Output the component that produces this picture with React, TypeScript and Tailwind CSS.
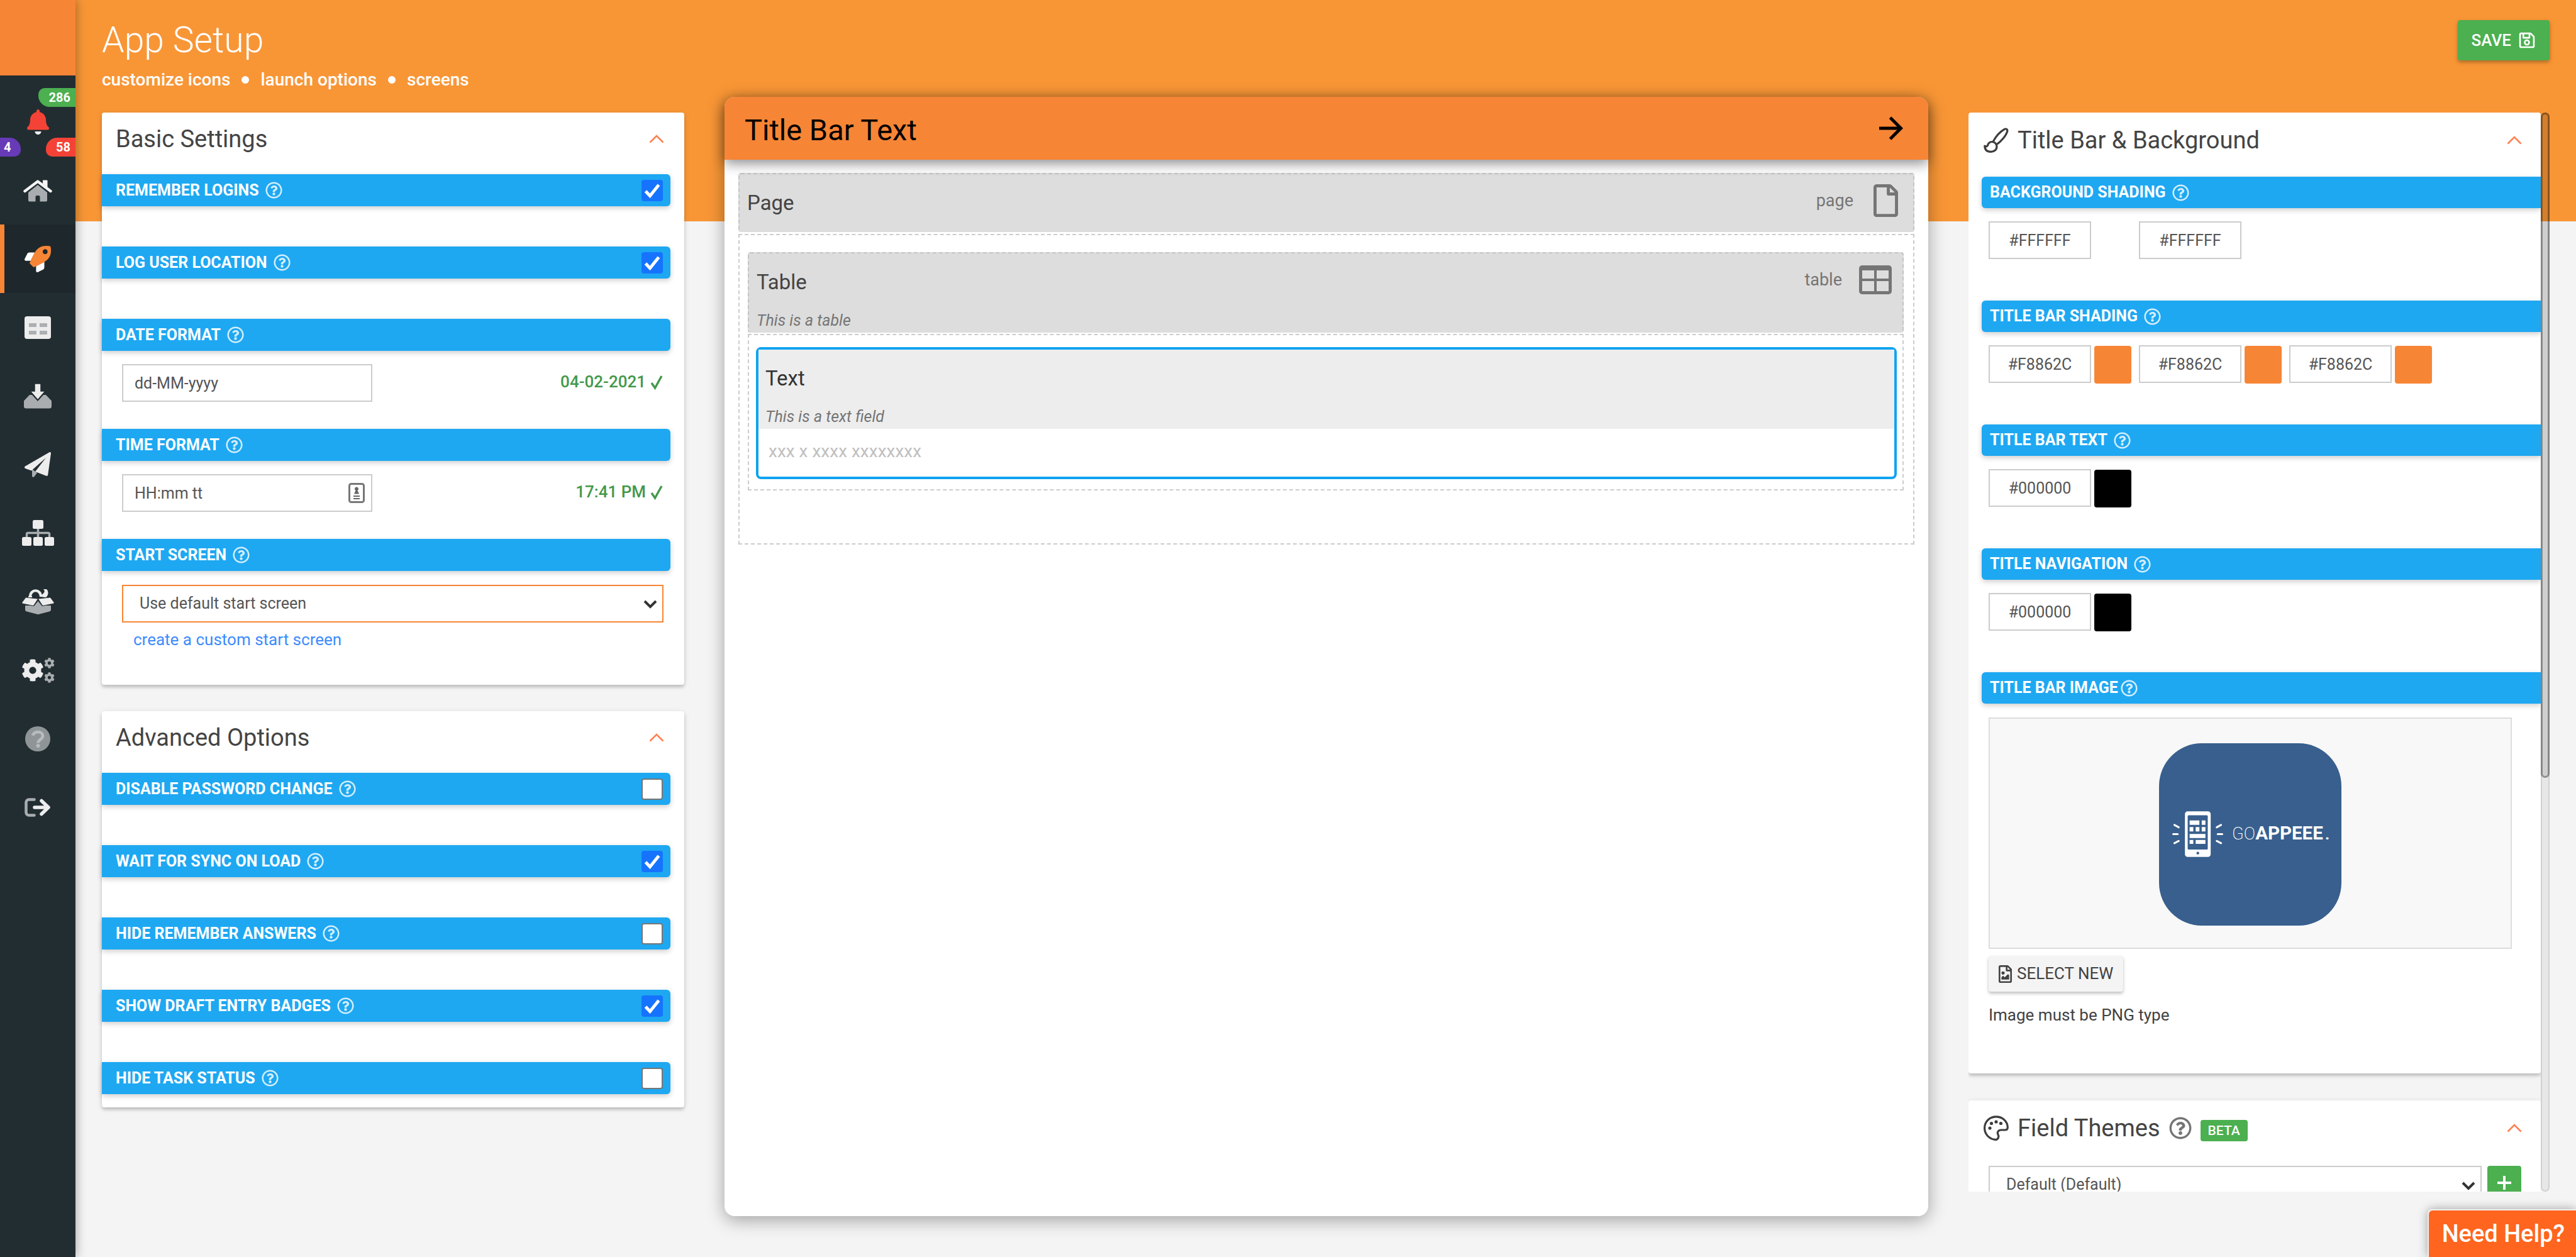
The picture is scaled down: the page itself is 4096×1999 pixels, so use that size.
import type { ReactNode } from 'react';
import { FaRegQuestionCircle, FaRegFileImage, FaRegSave, FaRegFile, FaCog } from 'react-icons/fa';

const CARD_SHADOW = 'shadow-[0_4px_4px_rgba(0,0,0,0.14),0_2px_10px_rgba(0,0,0,0.12)]';

function BellIcon() {
  return (
    <svg viewBox="0 0 448 512" className="h-[40px] w-[35px]" aria-hidden="true">
      <path fill="#f44336" d="M439.39 362.29c-19.32-20.76-55.47-51.99-55.47-154.29 0-77.7-54.48-139.9-127.94-155.16V32c0-17.67-14.32-32-31.98-32s-31.98 14.33-31.98 32v20.84C118.56 68.1 64.08 130.3 64.08 208c0 102.3-36.15 133.53-55.47 154.29-6 6.45-8.66 14.16-8.61 21.71.11 16.4 12.98 32 32.1 32h383.8c19.12 0 32-15.6 32.1-32 .05-7.55-2.61-15.27-8.61-21.71z" />
      <path fill="#eceff1" d="M224 512c35.32 0 63.97-28.65 63.97-64H160.03c0 35.35 28.65 64 63.97 64z" />
    </svg>
  );
}

function HomeIcon() {
  return (
    <svg viewBox="0 0 46 36" className="h-[36px] w-[46px]" aria-hidden="true">
      <path fill="#a9adaf" d="M23 9 38 21v12.500a2 2 0 0 1-2 2H26.500v-7.500a2 2 0 0 0-2-2h-3a2 2 0 0 0-2 2v7.500H10a2 2 0 0 1-2-2V21z" />
      <path fill="#f5f5f5" d="M31 1.500h6.500a1 1 0 0 1 1 1V13L31 7z" />
      <path fill="none" stroke="#f5f5f5" strokeWidth="4.400" strokeLinecap="round" strokeLinejoin="round" d="M2.500 19 23 3.500 43.500 19" />
    </svg>
  );
}

function RocketIcon() {
  return (
    <svg viewBox="0 0 512 512" className="h-[42px] w-[42px]" aria-hidden="true">
      <path fill="#ffffff" d="M199.100 128H94.900c-18.200 0-34.800 10.300-42.900 26.500L2.600 253.300c-8 16 3.600 34.700 21.500 34.700h95.100zM224 392v96c0 17.800 18.800 29.400 34.700 21.500l98.700-49.400c16.300-8.100 26.500-24.800 26.500-42.900V312z" />
      <path fill="#f78536" fillRule="evenodd" d="M505.100 19.100C503.800 13 499 8.200 492.900 6.900 460.700 0 435.500 0 410.400 0 307.200 0 245.300 55.200 199.100 128 165 190 135 255 101.200 325.700c-3.100 6.200-1.900 13.600 3 18.500l63.600 63.600c4.900 4.900 12.300 6.100 18.500 3C250 380 330 345 384 312.800c72.600-46.300 128-108.400 128-211.100.1-25.200.1-50.400-6.900-82.600zM400 160c-26.500 0-48-21.500-48-48s21.500-48 48-48 48 21.500 48 48-21.500 48-48 48z" />
    </svg>
  );
}

function GridIcon() {
  return (
    <svg viewBox="0 0 42 36" className="h-[36px] w-[42px]" aria-hidden="true">
      <rect width="42" height="36" rx="4" fill="#ededed" />
      <path fill="#adb0b2" d="M7 11h12v6H7zM24 11h12v6H24zM7 23h12v6H7zM24 23h12v6H24z" />
    </svg>
  );
}

function InboxIcon() {
  return (
    <svg viewBox="0 0 46 40" className="h-[40px] w-[46px]" aria-hidden="true">
      <path fill="#a9adaf" d="M10 18h4l9 10 9-10h4l9 9.500V36a3.500 3.500 0 0 1-3.500 3.500h-37A3.500 3.500 0 0 1 1 36v-8.500z" />
      <path fill="#ededed" stroke="#222d32" strokeWidth="1.500" d="M18 0h10v12h7L23 26 11 12h7z" />
    </svg>
  );
}

function PlaneIcon() {
  return (
    <svg viewBox="0 0 42 40" className="h-[40px] w-[42px]" aria-hidden="true">
      <path fill="#a9adaf" d="M12 27v11c0 1.800 2 2.500 3.200 1.200L20 33z" />
      <path fill="#ededed" d="M39.500.2 1 22.500c-1.500.9-1.300 2.800.2 3.400L11 29.500 34 9 17 31l17.500 6.800c1.200.5 2.500-.2 2.700-1.500L42 2C42.200.4 40.800-.5 39.500.2z" />
    </svg>
  );
}

function SitemapIcon() {
  return (
    <svg viewBox="0 0 51 41" className="h-[41px] w-[51px]" aria-hidden="true">
      <path fill="none" stroke="#a9adaf" strokeWidth="3.500" d="M25.500 12v17M7.500 29v-6.500a2 2 0 0 1 2-2h32a2 2 0 0 1 2 2V29" />
      <g fill="#ededed">
        <rect x="17" y="0" width="17" height="14" rx="2.500" />
        <rect x="0" y="27" width="15" height="14" rx="2.500" />
        <rect x="18" y="27" width="15" height="14" rx="2.500" />
        <rect x="36" y="27" width="15" height="14" rx="2.500" />
      </g>
    </svg>
  );
}

function BoxIcon() {
  return (
    <svg viewBox="0 0 51 40" className="h-[40px] w-[51px]" aria-hidden="true">
      <path fill="#a9adaf" d="M5 26h9l5 1 6.500-8L32 27l5-1h9v6.500c0 1.500-1 2.500-2.500 3L27 39.700a6 6 0 0 1-3 0L7.500 35.500C6 35 5 34 5 32.500z" />
      <path fill="none" stroke="#ededed" strokeWidth="4.200" d="M13 12c0-13 17-13 17 0" />
      <path fill="#ededed" d="M10 11h6v2h-6zM34 0c2 2 2.500 4 .5 6L29 12l9 1c4-3 5-9 1-13z" />
      <path fill="#ededed" stroke="#222d32" strokeWidth=".8" d="M6 13l19.500 2.200-6.500 10c-.6.900-1.500 1.200-2.500.9L1.200 23c-1-.3-1.500-1.300-1-2.200zM45 13l-19.500 2.200 6.500 10c.6.900 1.500 1.200 2.500.9L49.800 23c1-.3 1.500-1.300 1-2.200z" />
    </svg>
  );
}

function CogsIcon() {
  return (
    <span className="flex items-center" aria-hidden="true">
      <FaCog className="size-[36px] text-[#ededed]" />
      <span className="flex flex-col gap-[6px]">
        <FaCog className="size-[17px] text-[#a9adaf]" />
        <FaCog className="size-[17px] text-[#a9adaf]" />
      </span>
    </span>
  );
}

function QuestionIcon() {
  return (
    <svg viewBox="0 0 40 40" className="h-[40px] w-[40px]" aria-hidden="true">
      <circle cx="20" cy="20" r="20" fill="#8f9597" />
      <path fill="none" stroke="#b8bcbd" strokeWidth="4.600" d="M12 14.500C14 10 17 9 20 9c4.500 0 8 2.500 8 6.500 0 5.500-7.500 5.500-7.500 11" />
      <circle cx="20.500" cy="31" r="3" fill="#b8bcbd" />
    </svg>
  );
}

function SignOutIcon() {
  return (
    <svg viewBox="0 0 42 30" className="h-[30px] w-[42px]" aria-hidden="true">
      <path fill="none" stroke="#a9adaf" strokeWidth="4.500" strokeLinecap="round" d="M15.500 2.500H7A4.500 4.500 0 0 0 2.500 7v16A4.500 4.500 0 0 0 7 27.500h8.500" />
      <path fill="none" stroke="#ededed" strokeWidth="5.500" strokeLinecap="round" strokeLinejoin="round" d="M16 15h20M27 4.500 38 15 27 25.500" />
    </svg>
  );
}

function BrushIcon() {
  return (
    <svg viewBox="0 0 40 40" className="h-[40px] w-[40px]" fill="none" stroke="#3d3d3d" strokeWidth="3.200" strokeLinejoin="round" aria-hidden="true">
      <path d="M15 22.500C20 13 27 6 33 2.600c3-1.600 5.600.4 4.600 3.600C35.500 13 28 22 20.500 27" />
      <path d="M13.500 22.500c4 0 7.500 3 7.500 7.500 0 5-4 8.400-9.500 8.400-6 0-9.500-3.400-9.700-9.400 2 1.300 4 1.200 4.700-.8 1-3.500 3.500-5.700 7-5.700z" />
    </svg>
  );
}

function PaletteIcon() {
  return (
    <svg viewBox="0 0 40 40" className="h-[40px] w-[40px]" aria-hidden="true">
      <path fill="none" stroke="#3d3d3d" strokeWidth="3.200" d="M20 1.800C9.500 1.800 1.600 10 1.600 20c0 9.500 7 17 16.500 18.300 4.500.6 7-4 5-7.800-2.200-4.200.8-7.500 4.700-7.500h6.200c2.600 0 4.300-1.600 4.300-4C38.300 9.500 30 1.800 20 1.800z" />
      <g fill="#3d3d3d">
        <circle cx="10" cy="20" r="2.600" />
        <circle cx="12.500" cy="12.500" r="2.600" />
        <circle cx="20" cy="10" r="2.600" />
        <circle cx="27.500" cy="12.500" r="2.600" />
      </g>
    </svg>
  );
}

function TableIcon() {
  return (
    <svg viewBox="0 0 52 46" className="h-[46px] w-[52px]" aria-hidden="true">
      <path fill="#757575" fillRule="evenodd" d="M5 0h42a5 5 0 0 1 5 5v36a5 5 0 0 1-5 5H5a5 5 0 0 1-5-5V5a5 5 0 0 1 5-5zm0 8v13h19V8zm23 0v13h19V8zM5 25v16h19V25zm23 0v16h19V25z" />
    </svg>
  );
}

function LogoTile() {
  return (
    <svg viewBox="0 0 290 290" className="size-[290px]" role="img" aria-label="GoAppeee logo">
      <rect width="290" height="290" rx="68" fill="#385f8d" />
      <g transform="translate(11.400 92.400) scale(.3103)" fill="#fff">
        <path fillRule="evenodd" d="M110 51h104a14 14 0 0 1 14 14v206a14 14 0 0 1-14 14H110a14 14 0 0 1-14-14V65a14 14 0 0 1 14-14zm5 20a5 5 0 0 0-5 5v166a5 5 0 0 0 5 5h93a5 5 0 0 0 5-5V76a5 5 0 0 0-5-5zm47 187a7 7 0 1 0 0 14 7 7 0 0 0 0-14z" />
        <path d="M120 98h50v22h-50zM182 98h19v22h-19zM120 132h19v22h-19zM151 132h19v22h-19zM182 132h19v22h-19zM120 167h81v21h-81zM120 198h19v20h-19zM151 198h50v20h-50z" />
        <path fill="none" stroke="#fff" strokeWidth="10" strokeLinecap="round" d="m42 121 22 12M36 168h23M42 214l22-11M281 121l-22 12M287 168h-23M281 214l-22-11" />
        <text x="337" y="196" fontFamily="Roboto, sans-serif" fontSize="88" fontWeight="200">GO</text>
        <text x="457" y="196" fontFamily="Roboto, sans-serif" fontSize="95" fontWeight="700">APPEEE</text>
        <text x="814" y="196" fontFamily="Roboto, sans-serif" fontSize="80" fontWeight="700">.</text>
      </g>
    </svg>
  );
}

function CollapseButton({ label }: { label: string }) {
  return (
    <button type="button" aria-label={`Collapse ${label}`} className="ml-auto">
      <svg viewBox="0 0 24 14" className="h-[14px] w-[24px]" fill="none" stroke="#ff7f50" strokeWidth="2.600" aria-hidden="true">
        <path d="M1.500 12.500 12 2l10.500 10.500" />
      </svg>
    </button>
  );
}

function DropArrow({ className }: { className: string }) {
  return (
    <svg viewBox="0 0 22 14" className={`pointer-events-none absolute h-[14px] w-[22px] ${className}`} fill="none" stroke="#333" strokeWidth="4" aria-hidden="true">
      <path d="m2 2 9 9 9-9" />
    </svg>
  );
}

function HelpButton() {
  return (
    <button type="button" aria-label="Help" className="text-white/80">
      <FaRegQuestionCircle className="size-[27px]" />
    </button>
  );
}

function CheckBox({ id, checked }: { id: string; checked: boolean }) {
  return (
    <span className="relative mr-[12px] ml-auto flex">
      <input id={id} type="checkbox" defaultChecked={checked} className="peer size-[34px] appearance-none rounded-[4px] border-2 border-[#767676] bg-white checked:border-[#1673ff] checked:bg-[#1673ff]" />
      <svg viewBox="0 0 34 34" className="pointer-events-none absolute inset-0 hidden peer-checked:block" fill="none" stroke="#fff" strokeWidth="5" aria-hidden="true">
        <path d="m6.500 18 7 7.500L27.500 8" />
      </svg>
    </span>
  );
}

function SettingBar({ id, label, checked }: { id: string; label: string; checked?: boolean }) {
  return (
    <div className="mr-[22px] flex h-[51px] items-center gap-[10px] rounded-r-[6px] bg-[#1ea8f2] pl-[22px] text-[25px] font-bold text-white shadow-[0_3px_8px_rgba(0,0,0,0.2)]">
      <label htmlFor={id}>{label}</label>
      <HelpButton />
      {checked !== undefined && <CheckBox id={id} checked={checked} />}
    </div>
  );
}

function FormatField({ id, value, preview, children }: { id: string; value: string; preview: string; children?: ReactNode }) {
  return (
    <div className="flex h-[124px] items-start justify-between pt-[21px] pr-[34px] pl-[32px]">
      <div className="relative">
        <input id={id} type="text" defaultValue={value} className="h-[60px] w-[398px] border-2 border-[#cccccc] bg-white px-[18px] text-[25px] text-[#555]" />
        {children}
      </div>
      <span className="flex items-center gap-[7px] pt-[9px] text-[26px] font-medium text-[#43984a]">
        {preview}
        <svg viewBox="0 0 20 24" className="h-[24px] w-[20px]" fill="none" stroke="currentColor" strokeWidth="3.400" role="img" aria-label="valid">
          <path d="m2 13 5.500 8L18 2" />
        </svg>
      </span>
    </div>
  );
}

function Card({ title, children }: { title: string; children: ReactNode }) {
  return (
    <section className={`rounded-[4px] bg-white ${CARD_SHADOW}`}>
      <div className="mb-[14px] flex h-[84px] items-center pr-[32px] pl-[22px]">
        <h2 className="text-[38px] text-[#444]">{title}</h2>
        <CollapseButton label={title} />
      </div>
      {children}
    </section>
  );
}

function ThemeBar({ label, htmlFor, gap = 'gap-[10px]' }: { label: string; htmlFor: string; gap?: string }) {
  return (
    <div className={`ml-[21px] flex h-[50px] items-center rounded-l-[6px] bg-[#1ea8f2] pl-[13px] text-[25px] font-bold text-white shadow-[0_3px_8px_rgba(0,0,0,0.2)] ${gap}`}>
      <label htmlFor={htmlFor}>{label}</label>
      <HelpButton />
    </div>
  );
}

function ColorSetting({ id, label, colors }: { id: string; label: string; colors: { hex: string; swatch: string }[] }) {
  return (
    <div className="h-[197px]">
      <ThemeBar label={label} htmlFor={`${id}-0`} />
      <div className="flex gap-[12px] pt-[21px] pl-[32px]">
        {colors.map((c, i) => (
          <div key={i} className="flex gap-[5px]">
            <input id={`${id}-${i}`} aria-label={`${label} ${i + 1}`} type="text" defaultValue={c.hex} className="h-[60px] w-[163px] border-2 border-[#cccccc] bg-white text-center text-[25px] text-[#555]" />
            <button type="button" aria-label={`Pick ${c.hex}`} className={`mt-[1px] h-[60px] w-[59px] rounded-[4px] ${c.swatch}`} />
          </div>
        ))}
      </div>
    </div>
  );
}

const WHITE = { hex: '#FFFFFF', swatch: 'bg-white' };
const ORANGE = { hex: '#F8862C', swatch: 'bg-[#f78536]' };
const BLACK = { hex: '#000000', swatch: 'bg-black' };

const NAV: { label: string; icon: ReactNode; active?: boolean }[] = [
  { label: 'Home', icon: <HomeIcon /> },
  { label: 'Launch', icon: <RocketIcon />, active: true },
  { label: 'Screens', icon: <GridIcon /> },
  { label: 'Downloads', icon: <InboxIcon /> },
  { label: 'Send', icon: <PlaneIcon /> },
  { label: 'Structure', icon: <SitemapIcon /> },
  { label: 'Resources', icon: <BoxIcon /> },
  { label: 'Settings', icon: <CogsIcon /> },
  { label: 'Help', icon: <QuestionIcon /> },
  { label: 'Sign out', icon: <SignOutIcon /> },
];

function Sidebar() {
  return (
    <aside className="z-10 flex w-[120px] shrink-0 flex-col bg-[#222d32] shadow-[2px_0_14px_rgba(0,0,0,0.3)]">
      <div className="h-[120px] bg-[#f78536]" />
      <a href="#alerts" aria-label="Alerts" className="relative flex h-[128px] justify-center pt-[54px] text-[20px] leading-[30px] font-bold text-white">
        <BellIcon />
        <span className="absolute top-[20px] right-0 h-[30px] rounded-tl-[10px] rounded-bl-[18px] bg-[#4caf50] pr-[8px] pl-[17px]">286</span>
        <span className="absolute top-[99px] left-0 h-[30px] rounded-tr-[18px] rounded-br-[10px] bg-[#673ab7] pr-[16px] pl-[6px]">4</span>
        <span className="absolute top-[99px] right-0 h-[30px] rounded-tl-[18px] rounded-bl-[10px] bg-[#f44336] pr-[8px] pl-[16px]">58</span>
      </a>
      <nav className="flex flex-col">
        {NAV.map((item) => (
          <a
            key={item.label}
            href={`#${item.label}`}
            aria-label={item.label}
            className={item.active ? 'flex h-[109px] items-center justify-center border-l-[7px] border-[#f78536] bg-[#1e282c] pr-[7px]' : 'flex h-[109px] items-center justify-center'}
          >
            {item.icon}
          </a>
        ))}
      </nav>
    </aside>
  );
}

function Header() {
  return (
    <header className="flex h-[179px] shrink-0 items-start justify-between pt-[32px] pr-[42px] pl-[42px] text-white">
      <div>
        <h1 className="text-[57px] leading-[64px] font-light">App Setup</h1>
        <ul className="flex items-center gap-[18px] pt-[15px] text-[28px] leading-[32px] font-medium">
          <li>customize icons</li>
          <li className="size-[12px] rounded-full bg-white" aria-hidden="true" />
          <li>launch options</li>
          <li className="size-[12px] rounded-full bg-white" aria-hidden="true" />
          <li>screens</li>
        </ul>
      </div>
      <button type="button" className="flex h-[64px] items-center gap-[11px] rounded-[4px] bg-[#4caf50] px-[22px] text-[26px] font-medium shadow-[0_3px_6px_rgba(0,0,0,0.3)]">
        SAVE
        <FaRegSave className="size-[28px]" />
      </button>
    </header>
  );
}

function LeftColumn() {
  return (
    <div className="flex flex-col gap-[42px]">
      <Card title="Basic Settings">
        <div className="flex flex-col gap-[64px]">
          <SettingBar id="remember" label="REMEMBER LOGINS" checked />
          <SettingBar id="location" label="LOG USER LOCATION" checked />
          <SettingBar id="date" label="DATE FORMAT" />
        </div>
        <FormatField id="date" value="dd-MM-yyyy" preview="04-02-2021" />
        <SettingBar id="time" label="TIME FORMAT" />
        <FormatField id="time" value="HH:mm tt" preview="17:41 PM">
          <svg viewBox="0 0 26 32" className="absolute top-[14px] right-[12px] h-[32px] w-[26px]" aria-hidden="true">
            <rect x="1.500" y="1.500" width="23" height="29" rx="3" fill="#fff" stroke="#777" strokeWidth="3" />
            <path fill="#666" d="M13 6.500a3 3 0 0 1 1.500 5.600l2.500 5.400H9l2.500-5.400A3 3 0 0 1 13 6.500zM8 20h10v2H8zM8 24h10v2H8z" />
          </svg>
        </FormatField>
        <SettingBar id="start" label="START SCREEN" />
        <div className="h-[181px] pt-[22px] pr-[33px] pl-[32px]">
          <div className="relative">
            <select id="start" className="h-[60px] w-full appearance-none border-2 border-[#f78536] bg-white px-[26px] text-[25px] text-[#555]">
              <option>Use default start screen</option>
            </select>
            <DropArrow className="top-[24px] right-[10px]" />
          </div>
          <a href="#custom" className="mt-[11px] ml-[18px] inline-block text-[26px] leading-[32px] text-[#3d8bfd]">create a custom start screen</a>
        </div>
      </Card>
      <Card title="Advanced Options">
        <div className="flex flex-col gap-[64px] pb-[21px]">
          <SettingBar id="password" label="DISABLE PASSWORD CHANGE" checked={false} />
          <SettingBar id="sync" label="WAIT FOR SYNC ON LOAD" checked />
          <SettingBar id="answers" label="HIDE REMEMBER ANSWERS" checked={false} />
          <SettingBar id="badges" label="SHOW DRAFT ENTRY BADGES" checked />
          <SettingBar id="tasks" label="HIDE TASK STATUS" checked={false} />
        </div>
      </Card>
    </div>
  );
}

function Preview() {
  return (
    <section className="mt-[-25px] mb-[65px] rounded-[16px] bg-white shadow-[0_6px_28px_rgba(0,0,0,0.35)]">
      <div className="relative flex h-[100px] items-center justify-between rounded-t-[16px] bg-[#f78536] pr-[40px] pl-[32px] text-black shadow-[0_6px_20px_rgba(0,0,0,0.45)]">
        <h2 className="pt-[6px] text-[47px]">Title Bar Text</h2>
        <button type="button" aria-label="Next">
          <svg viewBox="0 0 38 38" className="size-[38px]" fill="none" stroke="#000" strokeWidth="5" aria-hidden="true">
            <path d="M0 19h34M17.500 2l17 17-17 17" />
          </svg>
        </button>
      </div>
      <div className="px-[22px] pt-[21px]">
        <div className="flex h-[94px] items-center justify-between rounded-[4px] border-2 border-b-0 border-dashed border-[#c4c4c4] bg-[#dddddd] pr-[24px] pl-[12px]">
          <h3 className="text-[33px] text-[#444]">Page</h3>
          <div className="flex items-center gap-[32px] pb-[8px] text-[27px] text-[#757575]">
            <span>page</span>
            <FaRegFile className="h-[52px] w-[39px]" />
          </div>
        </div>
        <div className="mt-[3px] border-2 border-dashed border-[#cccccc] pt-[27px] pr-[15px] pb-[84px] pl-[13px]">
          <div className="rounded-[4px] border-2 border-b-0 border-dashed border-[#c4c4c4] bg-[#dddddd] pr-[17px] pl-[12px]">
            <div className="flex h-[92px] items-center justify-between">
              <h3 className="text-[33px] text-[#444]">Table</h3>
              <div className="flex items-center gap-[27px] pb-[8px] text-[27px] text-[#757575]">
                <span>table</span>
                <TableIcon />
              </div>
            </div>
            <p className="h-[34px] text-[25px] leading-[30px] text-[#757575] italic">This is a table</p>
          </div>
          <div className="mt-[2px] border-2 border-dashed border-[#cccccc] pt-[19px] pr-[9px] pb-[16px] pl-[11px]">
            <div className="rounded-[8px] border-4 border-[#0fa3f1] bg-white">
              <div className="bg-[#ededed] px-[11px]">
                <div className="flex h-[92px] items-center">
                  <h3 className="text-[33px] text-[#333]">Text</h3>
                </div>
                <p className="h-[34px] text-[25px] leading-[30px] text-[#757575] italic">This is a text field</p>
              </div>
              <p className="h-[76px] px-[16px] pt-[20px] text-[28px] leading-[32px] text-[#c0c0c0]">xxx x xxxx xxxxxxxx</p>
            </div>
          </div>
        </div>
      </div>
    </section>
  );
}

function RightColumn() {
  return (
    <div className="mb-[104px] flex min-h-0 overflow-hidden">
      <div className="flex min-w-0 flex-1 flex-col gap-[43px] overflow-hidden">
        <section className={`shrink-0 rounded-[4px] bg-white ${CARD_SHADOW}`}>
          <div className="mb-[14px] flex h-[88px] items-center gap-[14px] pr-[30px] pl-[24px]">
            <BrushIcon />
            <h2 className="text-[38px] text-[#444]">Title Bar &amp; Background</h2>
            <CollapseButton label="Title Bar & Background" />
          </div>
          <ColorSetting id="bg" label="BACKGROUND SHADING" colors={[WHITE, WHITE]} />
          <ColorSetting id="bar" label="TITLE BAR SHADING" colors={[ORANGE, ORANGE, ORANGE]} />
          <ColorSetting id="text" label="TITLE BAR TEXT" colors={[BLACK]} />
          <ColorSetting id="nav" label="TITLE NAVIGATION" colors={[BLACK]} />
          <ThemeBar label="TITLE BAR IMAGE" htmlFor="image" gap="gap-[4px]" />
          <div className="flex h-[588px] flex-col items-start pt-[22px] pr-[46px] pl-[32px] text-[26px] text-[#424242]">
            <div className="flex h-[368px] w-full items-center justify-center border-2 border-[#dddddd] bg-[#f8f8f8] pt-[3px]">
              <LogoTile />
            </div>
            <button id="image" type="button" className="mt-[11px] flex h-[57px] items-center gap-[8px] rounded-[4px] bg-[#f4f4f4] px-[16px] shadow-[0_3px_5px_rgba(0,0,0,0.25)]">
              <FaRegFileImage className="h-[28px] w-[21px]" />
              SELECT NEW
            </button>
            <p className="mt-[18px]">Image must be PNG type</p>
          </div>
        </section>
        <section className="shrink-0 rounded-[4px] bg-white shadow-[0_2px_10px_rgba(0,0,0,0.12)]">
          <div className="mb-[16px] flex h-[88px] items-center gap-[14px] pr-[30px] pl-[24px]">
            <PaletteIcon />
            <h2 className="text-[38px] text-[#444]">Field Themes</h2>
            <button type="button" aria-label="Help" className="text-[#757575]">
              <FaRegQuestionCircle className="size-[36px]" />
            </button>
            <span className="mt-[8px] rounded-[4px] bg-[#4caf50] px-[12px] text-[21px] leading-[34px] font-medium text-white">BETA</span>
            <CollapseButton label="Field Themes" />
          </div>
          <div className="flex gap-[9px] pr-[31px] pb-[32px] pl-[32px]">
            <div className="relative flex-1">
              <select aria-label="Theme" className="h-[60px] w-full appearance-none border-2 border-[#cccccc] bg-white px-[26px] text-[25px] text-[#555]">
                <option>Default (Default)</option>
              </select>
              <DropArrow className="top-[25px] right-[10px]" />
            </div>
            <button type="button" aria-label="Add theme" className="flex h-[54px] w-[54px] items-center justify-center rounded-[4px] bg-[#4caf50]">
              <svg viewBox="0 0 22 22" className="size-[22px]" stroke="#fff" strokeWidth="4" aria-hidden="true">
                <path d="M11 0v22M0 11h22" />
              </svg>
            </button>
          </div>
        </section>
      </div>
      <div className="w-[14px] rounded-[7px] border-2 border-black/10 bg-black/5">
        <div className="-mx-[2px] -mt-[2px] h-[1058px] rounded-[7px] border-[3px] border-black/30 bg-black/10" />
      </div>
    </div>
  );
}

export default function App() {
  return (
    <div className="relative flex h-screen overflow-hidden bg-[#f4f4f4] font-['Roboto',sans-serif]">
      <Sidebar />
      <main className="flex min-w-0 flex-1 flex-col bg-[linear-gradient(#f89636_352px,#f4f4f4_352px)]">
        <Header />
        <div className="grid min-h-0 flex-1 grid-cols-[926fr_1914fr_924fr] grid-rows-[minmax(0,1fr)] gap-[64px] px-[42px]">
          <LeftColumn />
          <Preview />
          <RightColumn />
        </div>
      </main>
      <button type="button" className="absolute right-0 bottom-0 z-20 h-[76px] rounded-tl-[8px] border-t-2 border-l-2 border-[#f0f0f0] bg-[#ff651e] pr-[18px] pl-[21px] text-[38px] font-medium text-white shadow-[0_0_16px_rgba(0,0,0,0.35)]">
        Need Help?
      </button>
    </div>
  );
}
